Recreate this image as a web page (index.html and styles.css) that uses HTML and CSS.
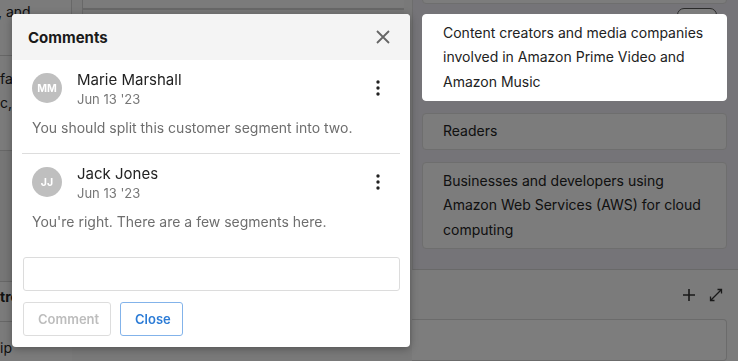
FILE: index.html
```html
<!DOCTYPE html>
<html lang="en">
<head>
    <meta charset="UTF-8">
    <meta name="viewport" content="width=device-width, initial-scale=1.0">
    <title>Comments</title>
    <link rel="stylesheet" href="styles.css">
</head>
<body>
    <div class="board">
        <div class="col-left">
            <div class="cell cell-a">, and</div>
            <div class="cell cell-b">fashion brands<br>c, music labels</div>
            <div class="cell cell-c"></div>
            <div class="cell cell-head">trends</div>
            <div class="cell cell-e">ip</div>
        </div>

        <div class="col-mid">
            <div class="mid-card"></div>
            <div class="mid-body"></div>
        </div>

        <div class="col-right">
            <div class="segments">
                <div class="segment segment-prev">Sellers</div>
                <span class="pill"></span>
                <div class="segment segment-active">Content creators and media companies involved in Amazon Prime Video and Amazon Music</div>
                <div class="segment">Readers</div>
                <div class="segment">Businesses and developers using Amazon Web Services (AWS) for cloud computing</div>
            </div>
            <div class="panel">
                <div class="panel-head">
                    <svg width="14" height="14" viewBox="0 0 14 14"><path d="M7 1v12M1 7h12" stroke="#333" stroke-width="1.6" fill="none"/></svg>
                    <svg width="14" height="14" viewBox="0 0 14 14"><path d="M8.5 1.5h4v4M12.5 1.5 1.5 12.5M1.5 8.5v4h4" stroke="#333" stroke-width="1.3" fill="none"/></svg>
                </div>
                <div class="panel-input"></div>
            </div>
        </div>
    </div>

    <div class="overlay"></div>

    <div class="modal">
        <div class="modal-header">
            <h2>Comments</h2>
            <button class="close-x">
                <svg width="14" height="14" viewBox="0 0 14 14"><path d="M1 1l12 12M13 1 1 13" stroke="#666" stroke-width="1.8" fill="none"/></svg>
            </button>
        </div>

        <div class="comment-list">
            <div class="comment">
                <div class="comment-top">
                    <div class="avatar">MM</div>
                    <div class="meta">
                        <div class="author">Marie Marshall</div>
                        <div class="date">Jun 13 '23</div>
                    </div>
                    <button class="kebab">
                        <svg width="4" height="16" viewBox="0 0 4 16"><circle cx="2" cy="2" r="1.7"/><circle cx="2" cy="8" r="1.7"/><circle cx="2" cy="14" r="1.7"/></svg>
                    </button>
                </div>
                <p class="comment-text">You should split this customer segment into two.</p>
            </div>
            <div class="comment">
                <div class="comment-top">
                    <div class="avatar">JJ</div>
                    <div class="meta">
                        <div class="author">Jack Jones</div>
                        <div class="date">Jun 13 '23</div>
                    </div>
                    <button class="kebab">
                        <svg width="4" height="16" viewBox="0 0 4 16"><circle cx="2" cy="2" r="1.7"/><circle cx="2" cy="8" r="1.7"/><circle cx="2" cy="14" r="1.7"/></svg>
                    </button>
                </div>
                <p class="comment-text">You're right. There are a few segments here.</p>
            </div>
        </div>

        <div class="modal-footer">
            <input class="comment-input" type="text">
            <div class="actions">
                <button class="btn btn-disabled">Comment</button>
                <button class="btn btn-outline">Close</button>
            </div>
        </div>
    </div>
</body>
</html>
```

FILE: styles.css
```css
body {
    font-family: Inter, "Noto Sans", sans-serif;
    background-color: #f3f3f3;
    color: #222;
    margin: 0;
    padding: 0;
    overflow: hidden;
}

.board {
    display: flex;
    height: 100vh;
    font-size: 14px;
}

/* left column, mostly cut off */
.col-left {
    width: 72px;
    display: flex;
    flex-direction: column;
    overflow: hidden;
    white-space: nowrap;
}

.cell {
    box-sizing: border-box;
    border-bottom: 1px solid #cfcfcf;
    background: #f6f6f6;
    line-height: 24.5px;
}

.cell-a {
    height: 56px;
    text-indent: -2px;
    border-right: 1px solid #d0d0d0;
}

.cell-b {
    height: 95px;
    padding-top: 11px;
}

.cell-c {
    height: 131px;
    background: #ececec;
}

.cell-head {
    height: 41px;
    padding-top: 3px;
    font-weight: bold;
}

.cell-e {
    flex: 1;
    border-bottom: none;
    padding-top: 14px;
}

.col-mid {
    width: 322px;
    margin: 0 8px 0 10px;
}

.mid-card {
    height: 8px;
    background: #f7f7f7;
    border-left: 1px solid #d0d0d0;
    border-bottom: 2px solid #d0d0d0;
}

.mid-body {
    height: 140px;
    border-left: 1px solid #d0d0d0;
    background: #efefef;
}

/* right column */
.col-right {
    flex: 1;
    display: flex;
    flex-direction: column;
    position: relative;
}

.segments {
    height: 273px;
    box-sizing: border-box;
    padding: 0 11px 0 9px;
    background: #eae8f0;
    border-left: 1px solid #dadada;
    border-bottom: 1px solid #d2d2d2;
}

.segment {
    background: #f8f8f8;
    border: 1px solid #dcdcdc;
    border-radius: 4px;
    padding: 5.5px 14px 5.5px 20px;
    line-height: 24.5px;
    margin-top: 12px;
}

.segment-prev {
    height: 30px;
    box-sizing: border-box;
    margin-top: -26px;
    overflow: hidden;
}

.segment-active {
    position: relative;
    z-index: 2;
    background: #fff;
    border-color: #fff;
    margin-top: 10px;
}

.pill {
    position: absolute;
    top: 8px;
    left: 265px;
    width: 38px;
    height: 12px;
    border: 1.5px solid #555;
    border-radius: 8px;
    background: #f8f8f8;
}

.panel {
    flex: 1;
    background: #f6f6f6;
}

.panel-head {
    height: 49px;
    display: flex;
    justify-content: flex-end;
    align-items: center;
    gap: 13px;
    padding-right: 15px;
}

.panel-input {
    height: 40px;
    margin-right: 11px;
    border: 1px solid #d6d6d6;
    border-left: none;
    border-radius: 0 4px 4px 0;
    background: #fbfbfb;
}

.overlay {
    position: fixed;
    inset: 0;
    background: rgba(0, 0, 0, 0.5);
    z-index: 1;
}

/* modal */
.modal {
    position: absolute;
    top: 14px;
    left: 12px;
    width: 398px;
    height: 333px;
    z-index: 3;
    background: white;
    border-radius: 4px;
    box-shadow: 0 2px 8px rgba(0, 0, 0, 0.3);
    display: flex;
    flex-direction: column;
    overflow: hidden;
}

.modal-header {
    height: 46px;
    flex-shrink: 0;
    display: flex;
    justify-content: space-between;
    align-items: center;
    padding: 0 20px 0 16px;
    background: #f4f4f4;
}

.modal-header h2 {
    margin: 0;
    font-size: 15px;
    font-weight: 700;
    color: #1a1a1a;
}

.close-x,
.kebab {
    background: none;
    border: none;
    padding: 0;
    cursor: pointer;
    display: flex;
    align-items: center;
    justify-content: center;
}

.comment-list {
    padding: 0 10px;
}

.comment {
    padding: 13px 10px 15px;
}

.comment + .comment {
    border-top: 1px solid #dddddd;
}

.comment-top {
    display: flex;
    align-items: flex-start;
}

.avatar {
    width: 30px;
    height: 30px;
    border-radius: 50%;
    background: #bfbfbf;
    color: white;
    font-size: 10.5px;
    font-weight: 700;
    display: flex;
    align-items: center;
    justify-content: center;
    flex-shrink: 0;
}

.meta {
    flex: 1;
    margin: -2px 0 0 15px;
}

.author {
    font-size: 15px;
    line-height: 18px;
    color: #222;
}

.date {
    font-size: 13px;
    line-height: 20px;
    color: #777;
}

.kebab {
    width: 24px;
    height: 24px;
    margin-top: 3px;
    fill: #222;
}

.comment-text {
    margin: 9px 0 0;
    font-size: 14px;
    line-height: 20px;
    color: #6e6e6e;
}

.modal-footer {
    padding: 10px 10px 11px 11px;
    margin-top: auto;
}

.comment-input {
    display: block;
    width: 100%;
    height: 34px;
    box-sizing: border-box;
    border: 1px solid #dcdcdc;
    border-radius: 3px;
    font-family: inherit;
    font-size: 14px;
    padding: 0 10px;
}

.actions {
    display: flex;
    gap: 9px;
    margin-top: 11px;
}

.btn {
    height: 34px;
    padding: 0 14px;
    border-radius: 3px;
    background: white;
    font-family: inherit;
    font-size: 13px;
    font-weight: 600;
    cursor: pointer;
}

.btn-disabled {
    width: 88px;
    border: 1px solid #dddddd;
    color: #bdbdbd;
}

.btn-outline {
    width: 63px;
    border: 1px solid #83b3ea;
    color: #2b7bd6;
}
```
